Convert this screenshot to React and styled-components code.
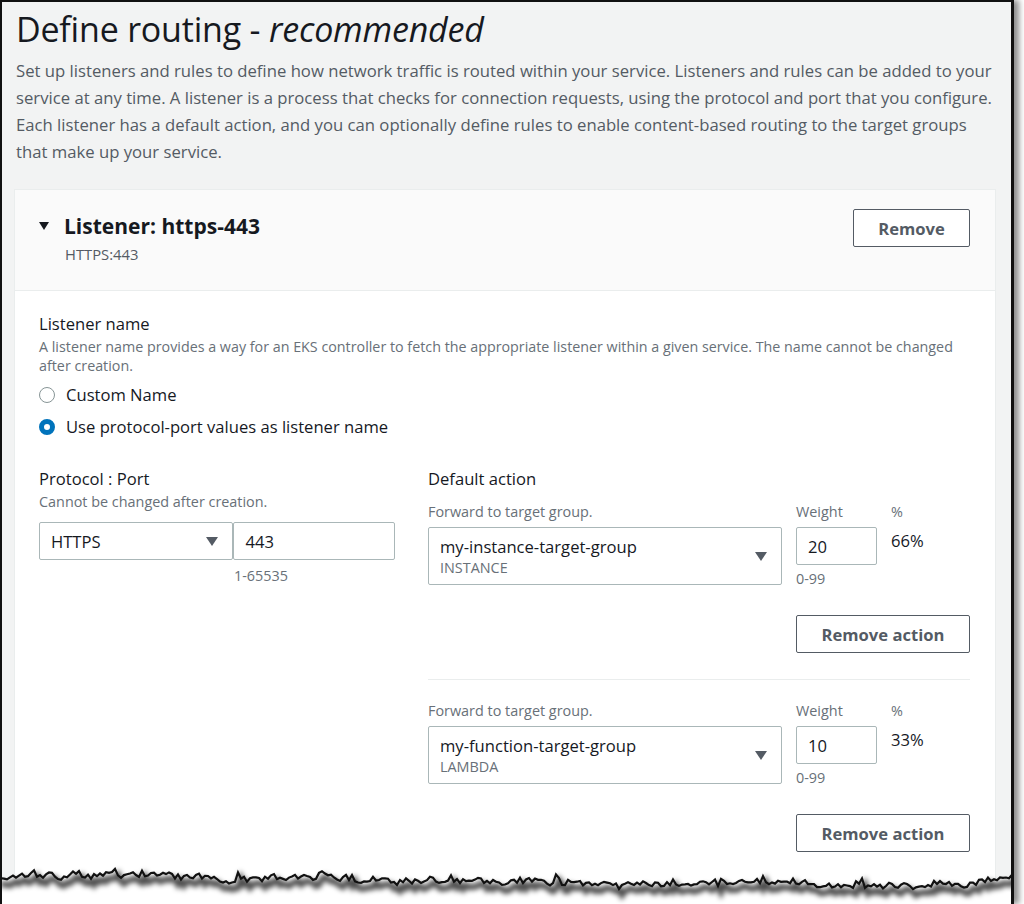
import React from 'react'
import styled, { createGlobalStyle } from 'styled-components'

const GlobalStyle = createGlobalStyle`
  html, body {
    margin: 0;
    padding: 0;
    background: #ffffff;
  }
  body {
    font-family: "Open Sans", "Noto Sans", sans-serif;
    color: #16191f;
  }
`

const Frame = styled.div`
  position: relative;
  width: 1014px;
  height: 904px;
  box-sizing: border-box;
  border: 2px solid #111;
  border-right-width: 3px;
  border-bottom: none;
  background: #f2f3f3;
  box-shadow: 5px 0 6px rgba(0, 0, 0, 0.45);
  overflow: hidden;
  padding: 7px 16px 0 12px;
`

const Title = styled.h1`
  margin: 0 0 0 2px;
  font-size: 34px;
  font-weight: 400;
  line-height: 40px;
  letter-spacing: -0.2px;

  em {
    font-style: italic;
  }
`

const Intro = styled.p`
  margin: 8px 0 0 2px;
  font-size: 16.7px;
  line-height: 27px;
  color: #545b64;
`

const Card = styled.section`
  margin-top: 24px;
  width: 982px;
  background: #ffffff;
  border: 1px solid #eaeded;
  box-sizing: border-box;
`

const CardHeader = styled.header`
  display: flex;
  justify-content: space-between;
  align-items: flex-start;
  background: #fafafa;
  border-bottom: 1px solid #eaeded;
  padding: 19px 25px 20px 24px;
  height: 101px;
  box-sizing: border-box;
`

const HeaderTitle = styled.div`
  display: flex;
  flex-direction: column;
`

const HeaderRow = styled.div`
  display: flex;
  align-items: center;
  gap: 15px;
  font-size: 21px;
  font-weight: 700;
  line-height: 34px;
`

const Caret = styled.span`
  display: inline-block;
  width: 0;
  height: 0;
  border-left: ${p => p.size}px solid transparent;
  border-right: ${p => p.size}px solid transparent;
  border-top: ${p => p.size * 1.5}px solid ${p => p.color || '#16191f'};
`

const SubText = styled.div`
  font-size: 14.8px;
  color: #545b64;
  padding-left: ${p => p.indent || 0}px;
  line-height: 20px;
  margin-top: 1px;
`

const Button = styled.button`
  font-family: inherit;
  font-size: 16.6px;
  font-weight: 700;
  color: #545b64;
  background: #ffffff;
  border: 1px solid #545b64;
  border-radius: 2px;
  height: 38px;
  width: ${p => p.width}px;
  padding: 0;
  cursor: pointer;
`

const CardBody = styled.div`
  padding: 22px 25px 80px 24px;
`

const Label = styled.div`
  font-size: 16.6px;
  line-height: 22px;
  color: #16191f;
`

const Hint = styled.div`
  font-size: ${p => p.size || 14.4}px;
  line-height: 19px;
  color: #687078;
  margin-top: ${p => p.top || 0}px;
  margin-left: ${p => p.indent || 0}px;
`

const RadioList = styled.div`
  display: flex;
  flex-direction: column;
  gap: 10px;
  margin-top: 9px;
`

const RadioRow = styled.label`
  display: flex;
  align-items: center;
  gap: 11px;
  font-size: 16.6px;
  line-height: 22px;
`

const RadioDot = styled.span`
  width: 16px;
  height: 16px;
  border-radius: 50%;
  box-sizing: border-box;
  border: ${p => (p.checked ? '5px solid #0073bb' : '1.5px solid #879596')};
  background: #ffffff;
`

const Columns = styled.div`
  display: grid;
  grid-template-columns: 356px 542px;
  column-gap: 33px;
  margin-top: 30px;
`

const Column = styled.div`
  display: flex;
  flex-direction: column;
`

const InputPair = styled.div`
  display: flex;
  margin-top: 11px;
`

const Field = styled.div`
  display: flex;
  align-items: center;
  justify-content: space-between;
  box-sizing: border-box;
  width: ${p => p.width}px;
  height: ${p => p.height}px;
  border: 1px solid #aab7b8;
  border-radius: 2px;
  background: #ffffff;
  padding: 0 ${p => p.padRight || 10}px 0 11px;
  font-size: 16.6px;
  color: #16191f;
`

const SelectText = styled.div`
  display: flex;
  flex-direction: column;
  line-height: 22px;

  small {
    font-size: 14.4px;
    line-height: 19px;
    color: #687078;
  }
`

const ActionGroup = styled.div`
  padding-top: ${p => (p.first ? 13 : 22)}px;
  padding-bottom: 26px;
  border-bottom: ${p => (p.divider ? '1px solid #eaeded' : 'none')};
`

const ActionGrid = styled.div`
  display: grid;
  grid-template-columns: 354px 81px auto;
  column-gap: 14px;
  align-items: start;
`

const SmallLabel = styled.div`
  font-size: 14.4px;
  line-height: 18px;
  color: #687078;
  margin-bottom: 6px;
`

const Percent = styled.div`
  font-size: 16.6px;
  line-height: 22px;
  padding-top: 3px;
`

const ButtonRow = styled.div`
  display: flex;
  justify-content: flex-end;
  margin-top: 27px;
`

const TornEdge = styled.svg`
  position: absolute;
  left: -2px;
  top: 848px;
  width: 1026px;
  height: 56px;
`

function jaggedPoints() {
  let seed = 11
  const rand = () => {
    seed = (seed * 16807) % 2147483647
    return (seed - 1) / 2147483646
  }
  const pts = []
  let drift = 0
  for (let x = -2; x <= 1028; x += 3) {
    drift += (rand() - 0.5) * 3.4
    drift = Math.max(-10, Math.min(8, drift))
    const spike = rand() < 0.12 ? -(rand() * 6) : 0
    const y = 32 + drift + (rand() - 0.5) * 6 + spike
    pts.push([x, y.toFixed(1)])
  }
  return pts
}

const edge = jaggedPoints()
const edgeLine = edge.map(p => p.join(',')).join(' ')
const edgeFill = `${edgeLine} 1028,60 -2,60`

function ActionBlock({ first, divider, name, type, weight, percent }) {
  return (
    <ActionGroup first={first} divider={divider}>
      <ActionGrid>
        <div>
          <SmallLabel>Forward to target group.</SmallLabel>
          <Field width={354} height={58} padRight={14}>
            <SelectText>
              <span>{name}</span>
              <small>{type}</small>
            </SelectText>
            <Caret size={6} color="#545b64" />
          </Field>
        </div>
        <div>
          <SmallLabel>Weight</SmallLabel>
          <Field width={81} height={38}>{weight}</Field>
          <Hint top={4}>0-99</Hint>
        </div>
        <div>
          <SmallLabel>%</SmallLabel>
          <Percent>{percent}</Percent>
        </div>
      </ActionGrid>
      <ButtonRow>
        <Button width={174}>Remove action</Button>
      </ButtonRow>
    </ActionGroup>
  )
}

export default function App() {
  return (
    <>
      <GlobalStyle />
      <Frame>
        <Title>
          Define routing - <em>recommended</em>
        </Title>
        <Intro>
          Set up listeners and rules to define how network traffic is routed within your service. Listeners and rules can be added to your
          service at any time. A listener is a process that checks for connection requests, using the protocol and port that you configure.
          Each listener has a default action, and you can optionally define rules to enable content-based routing to the target groups
          that make up your service.
        </Intro>
        <Card>
          <CardHeader>
            <HeaderTitle>
              <HeaderRow>
                <Caret size={5.5} />
                <span>Listener: https-443</span>
              </HeaderRow>
              <SubText indent={26}>HTTPS:443</SubText>
            </HeaderTitle>
            <Button width={117}>Remove</Button>
          </CardHeader>
          <CardBody>
            <Label>Listener name</Label>
            <Hint top={2} size={14.3}>
              A listener name provides a way for an EKS controller to fetch the appropriate listener within a given service. The name cannot be changed after creation.
            </Hint>
            <RadioList>
              <RadioRow>
                <RadioDot />
                Custom Name
              </RadioRow>
              <RadioRow>
                <RadioDot checked />
                Use protocol-port values as listener name
              </RadioRow>
            </RadioList>
            <Columns>
              <Column>
                <Label>Protocol : Port</Label>
                <Hint top={2}>Cannot be changed after creation.</Hint>
                <InputPair>
                  <Field width={195} height={38} padRight={14}>
                    <span>HTTPS</span>
                    <Caret size={6} color="#545b64" />
                  </Field>
                  <Field width={162} height={38}>443</Field>
                </InputPair>
                <Hint top={6} indent={195}>1-65535</Hint>
              </Column>
              <Column>
                <Label>Default action</Label>
                <ActionBlock first divider name="my-instance-target-group" type="INSTANCE" weight="20" percent="66%" />
                <ActionBlock name="my-function-target-group" type="LAMBDA" weight="10" percent="33%" />
              </Column>
            </Columns>
          </CardBody>
        </Card>
        <TornEdge viewBox="0 0 1026 56" preserveAspectRatio="none">
          <defs>
            <filter id="blur" x="-5%" y="-50%" width="110%" height="200%">
              <feGaussianBlur stdDeviation="2.5" />
            </filter>
          </defs>
          <polygon points={edgeFill} fill="#ffffff" />
          <polyline
            points={edgeLine}
            fill="none"
            stroke="rgba(0,0,0,0.7)"
            strokeWidth="6"
            transform="translate(3,6)"
            filter="url(#blur)"
          />
          <polyline points={edgeLine} fill="none" stroke="#111" strokeWidth="2.2" />
        </TornEdge>
      </Frame>
    </>
  )
}
